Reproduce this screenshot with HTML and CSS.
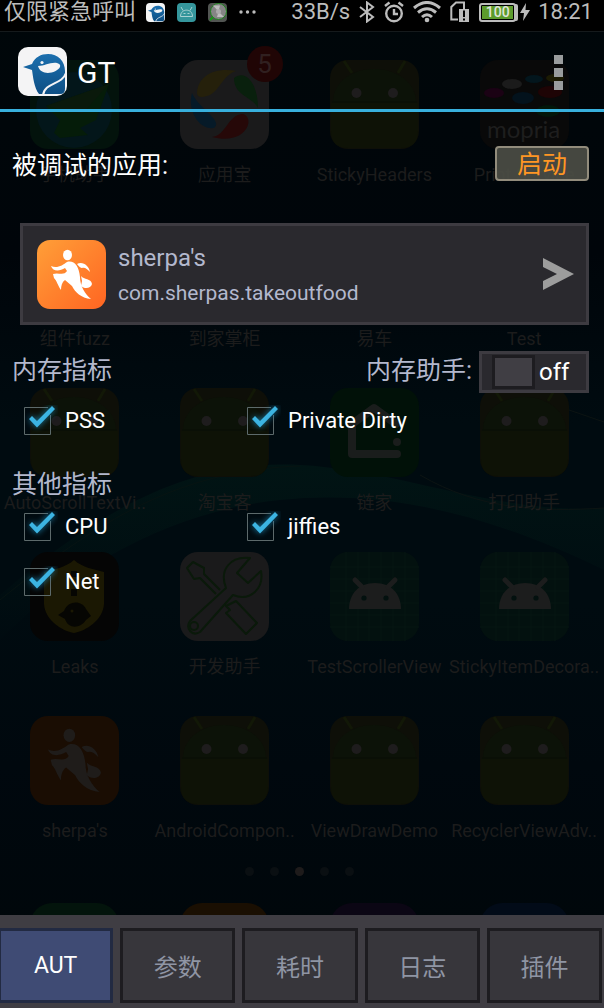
FILE: index.html
```html
<!DOCTYPE html>
<html lang="zh-CN">
<head>
  <meta charset="UTF-8" />
  <meta name="viewport" content="width=device-width, initial-scale=1" />
  <title>GT</title>
  <link rel="stylesheet" href="styles.css">
</head>
<body>
  <!-- shared icons -->
  <svg class="defs" aria-hidden="true">
    <linearGradient id="orange" x1="0" y1="0" x2="1" y2="1">
      <stop offset="0" stop-color="#ff9f38" />
      <stop offset="1" stop-color="#ff6522" />
    </linearGradient>
    <linearGradient id="blue" x1="0" y1="0" x2="0" y2="1">
      <stop offset="0" stop-color="#1b6fae" />
      <stop offset="1" stop-color="#0e4f84" />
    </linearGradient>
    <symbol id="bird" viewBox="0 0 49 49">
      <rect width="49" height="49" rx="10" fill="#f4f4f5" />
      <path d="M5 20 14 17C17 10 23 7 30 7c10 0 17 7 17 17V42q0 5-5 5H21C16 41 15 29 14 23Z" fill="url(#blue)" />
      <path d="M25 48C27 35 44 38 48 26" fill="none" stroke="#f4f4f5" stroke-width="2" />
      <path d="M20 19C27 19 32 15 39 16q4 1 3 4c-3 6-19 10-22-1Z" fill="#f4f4f5" />
      <circle cx="24" cy="15.500" r="1.600" fill="#f4f4f5" />
    </symbol>
    <symbol id="runner" viewBox="0 0 69 69">
      <ellipse cx="30.500" cy="15" rx="4.500" ry="5.200" />
      <path d="M14 26C20 29 26 25 30 22C37 20 42 26 43 37C43 46 48 54 54 59C44 58 38 52 35 46L28 40C25 42 24 46 24 50C20 44 20 41 17 38L16 34C21 32 27 36 30 31L28 28C23 31 16 32 14 26Z" />
      <path d="M40 24C46 21 52 26 53 32C50 29 48 27 45 28Q43 28 40 24Z" />
      <path d="M44 36C47 40 54 38 55 44C54 49 47 49 44 46L45 41ZM41 27 45 37" />
    </symbol>
    <symbol id="droid" viewBox="0 0 89 89">
      <rect width="89" height="89" rx="18" fill="#0e0f08" />
      <path d="M3 42C3 22 22 9 44 9s42 13 42 33Z" fill="#0c1208" />
      <path d="M1 43H88V71Q88 88 71 88H18Q1 88 1 71Z" fill="#0e1206" />
      <path d="M14 1 22 13M75 1 68 13" stroke="#121807" stroke-width="3" />
      <path d="M2 42H87" stroke="#0a0f06" stroke-width="2" />
      <circle cx="26.500" cy="33" r="5" fill="#1e1c1d" />
      <circle cx="63" cy="33" r="5" fill="#1e1c1d" />
    </symbol>
    <symbol id="studio" viewBox="0 0 89 89">
      <rect width="89" height="89" rx="18" fill="#03110f" />
      <path d="M16 0V89M28 0V89M39 0V89M51 0V89M63 0V89M75 0V89M0 15H89M0 27H89M0 39H89M0 51H89M0 63H89M0 75H89" stroke="#061613" />
      <path d="M19 57C19 43 28 31 45 31S71 43 71 57Z" fill="#1c1d1d" />
      <path d="M25 28 32 35M65 28 58 35" stroke="#1c1d1d" stroke-width="5" stroke-linecap="round" />
      <circle cx="34" cy="46" r="2.600" fill="#03110f" />
      <circle cx="56" cy="46" r="2.600" fill="#03110f" />
    </symbol>
    <symbol id="check" viewBox="0 0 34 30">
      <path d="M24 2.500H.5V29.500H26.500V10" fill="none" stroke="#5d6a6b" />
      <path class="tick" d="M5 14 8 11 13 16 28 1 31 4 13 22.500Z" />
    </symbol>
  </svg>

  <div class="screen">
    <div class="launcher">
      <svg class="waves" viewBox="0 0 604 1008" preserveAspectRatio="none" aria-hidden="true">
        <linearGradient id="wave" x1="0" y1="0" x2="0" y2="1">
          <stop offset="0" stop-color="#011414" />
          <stop offset="1" stop-color="#000b10" />
        </linearGradient>
        <path d="M0 595C110 500 200 460 300 465S500 515 604 508V570C480 510 380 490 280 500S80 560 0 640Z" fill="url(#wave)" />
        <path d="M0 600C110 510 190 470 300 466" fill="none" stroke="#071312" />
        <path d="M420 475C480 510 540 512 604 508M540 400 604 422" fill="none" stroke="#0c1413" />
      </svg>
      <ul class="apps">
        <li>
          <svg viewBox="0 0 89 89" aria-hidden="true">
            <rect width="89" height="89" rx="18" fill="#03130c" />
            <circle cx="44" cy="50" r="38" fill="#03161a" />
            <path d="M16 46 79 24 66 60 50 68 58 75 30 78 24 73 30 60Z" fill="#051c09" />
            <path d="M16 46 52 54 79 24Z" fill="#0a190b" />
          </svg>
          <span>手机助手</span>
        </li>
        <li>
          <svg viewBox="0 0 89 89" aria-hidden="true">
            <rect width="89" height="89" rx="18" fill="#1a1a1b" />
            <path d="M17 33C18 15 36 7 56 11C40 16 40 36 22 37Q17 37 17 33Z" fill="#25200b" />
            <path d="M54 18C66 9 78 24 78 48C72 36 54 36 54 18Z" fill="#09200d" />
            <path d="M32 77C46 76 48 54 63 54C76 58 66 86 32 77Z" fill="#260808" />
            <path d="M12 33C7 52 20 70 34 68C44 61 18 48 12 33Z" fill="#061a28" />
          </svg>
          <b class="badge">5</b>
          <span>应用宝</span>
        </li>
        <li><svg aria-hidden="true"><use href="#droid" /></svg><span>StickyHeaders</span></li>
        <li>
          <svg viewBox="0 0 89 89" aria-hidden="true">
            <rect width="89" height="89" rx="18" fill="#090909" />
            <ellipse cx="32" cy="24" rx="10" ry="5" fill="#1b1b1b" />
            <ellipse cx="54" cy="19" rx="9" ry="4" fill="#03161d" />
            <ellipse cx="75" cy="18" rx="9" ry="4" fill="#1c1b03" />
            <ellipse cx="14" cy="33" rx="10" ry="5" fill="#1b0214" />
            <ellipse cx="43" cy="38" rx="11" ry="6" fill="#03121c" />
            <ellipse cx="70" cy="32" rx="12" ry="6" fill="#1e0405" />
            <ellipse cx="68" cy="51" rx="12" ry="6" fill="#03160a" />
            <text x="7" y="78" class="mopria">mopria</text>
          </svg>
          <span>Print Service</span>
        </li>

        <li><svg aria-hidden="true"><use href="#droid" /></svg><span>组件fuzz</span></li>
        <li><svg aria-hidden="true"><use href="#droid" /></svg><span>到家掌柜</span></li>
        <li><svg aria-hidden="true"><use href="#droid" /></svg><span>易车</span></li>
        <li><svg aria-hidden="true"><use href="#droid" /></svg><span>Test</span></li>

        <li><svg aria-hidden="true"><use href="#droid" /></svg><span>AutoScrollTextVi..</span></li>
        <li><svg aria-hidden="true"><use href="#droid" /></svg><span>淘宝客</span></li>
        <li>
          <svg viewBox="0 0 89 89" aria-hidden="true">
            <rect width="89" height="89" rx="18" fill="#011108" />
            <path d="M67 66H22V36L44 20 66 36" fill="none" stroke="#1a1d1c" stroke-width="8" stroke-linejoin="round" stroke-linecap="round" />
            <circle cx="67" cy="54" r="4" fill="#1a1d1c" />
          </svg>
          <span>链家</span>
        </li>
        <li><svg aria-hidden="true"><use href="#droid" /></svg><span>打印助手</span></li>

        <li>
          <svg viewBox="0 0 89 89" aria-hidden="true">
            <rect width="89" height="89" rx="18" fill="#050505" />
            <path d="M44 8C53 16 64 17 74 20V52C73 68 56 79 44 81C32 79 15 68 14 52V20C24 17 35 16 44 8Z" fill="#1b1803" />
            <path d="M41 19H47V25H41ZM41 37H47V44H41ZM28 63 34 59C38 48 52 48 56 57L61 64 56 68C50 77 38 77 35 67Z" fill="#060603" />
            <circle cx="42" cy="59" r="1.500" fill="#1b1803" />
          </svg>
          <span>Leaks</span>
        </li>
        <li>
          <svg viewBox="0 0 89 89" aria-hidden="true">
            <rect width="89" height="89" rx="18" fill="#1a1a1b" />
            <g fill="none" stroke="#0a190a" stroke-width="2" stroke-linejoin="round">
              <path d="M70 6C50 4 39 18 46 36L10 69C5 76 12 85 20 80L53 43C71 50 84 36 81 19L68 31 57 21Z" />
              <circle cx="14" cy="74" r="4" />
              <path d="M36 42 20 26 14 27 7 16 13 10 24 16V22L40 38M46 54 56 49 77 71 66 82 46 61 50 58Z" />
            </g>
          </svg>
          <span>开发助手</span>
        </li>
        <li><svg aria-hidden="true"><use href="#studio" /></svg><span>TestScrollerView</span></li>
        <li><svg aria-hidden="true"><use href="#studio" /></svg><span>StickyItemDecora..</span></li>

        <li>
          <svg viewBox="0 0 69 69" aria-hidden="true">
            <rect width="69" height="69" rx="14" fill="#1a0d03" />
            <use href="#runner" fill="#1f1c1a" />
          </svg>
          <span>sherpa's</span>
        </li>
        <li><svg aria-hidden="true"><use href="#droid" /></svg><span>AndroidCompon..</span></li>
        <li><svg aria-hidden="true"><use href="#droid" /></svg><span>ViewDrawDemo</span></li>
        <li><svg aria-hidden="true"><use href="#droid" /></svg><span>RecyclerViewAdv..</span></li>
      </ul>
      <div class="pager"><i></i><i></i><i class="current"></i><i></i><i></i></div>
      <div class="dock">
        <i class="phone"></i><i class="contacts"></i><i class="messages"></i><i class="browser"></i>
      </div>
    </div>

    <div class="app">
      <div class="status-bar">
        <span class="carrier">仅限紧急呼叫</span>
        <div class="notices">
          <svg width="19" height="19" aria-hidden="true"><use href="#bird" /></svg>
          <svg width="19" height="19" viewBox="0 0 19 19" aria-hidden="true">
            <rect width="19" height="19" rx="4" fill="#35969c" />
            <path d="M3.500 13.500C3.500 5 15.500 5 15.500 13.500ZM4 4 6 7.500M15 4 13 7.500" fill="none" stroke="#a9d2d3" />
            <path d="M6.500 10.500h2M10.500 10.500h2" stroke="#a9d2d3" />
          </svg>
          <svg width="19" height="19" viewBox="0 0 19 19" aria-hidden="true">
            <rect width="19" height="19" rx="4" fill="#525552" />
            <path d="M2 17 5 14" stroke="#159915" stroke-width="2" />
            <circle cx="10.500" cy="8.500" r="8" fill="#858585" stroke="#1c841c" />
            <path d="M10.500 8.500 5 2.500h7ZM10.500 8.500 16 14H9Z" fill="#bdbdbd" />
            <circle cx="10.500" cy="8.500" r="2.500" fill="#aaa" />
          </svg>
          <svg width="17" height="4" viewBox="0 0 17 4" class="more" aria-hidden="true">
            <circle cx="2" cy="2" r="1.700" /><circle cx="8.500" cy="2" r="1.700" /><circle cx="15" cy="2" r="1.700" />
          </svg>
        </div>
        <div class="system">
          <span>33B/s</span>
          <svg width="16" height="22" viewBox="0 0 16 22" aria-hidden="true">
            <path d="M1 6 14 16 8 20.500V1.500L14 6 1 16" fill="none" stroke="#bcbcbc" stroke-width="2" />
          </svg>
          <svg width="20" height="22" viewBox="0 0 20 22" aria-hidden="true">
            <g fill="none" stroke="#bcbcbc" stroke-width="2.400">
              <circle cx="10" cy="12.500" r="7.800" />
              <path d="M10 8V13H14M1 5 5.500 1.500M19 5 14.500 1.500" />
            </g>
          </svg>
          <svg width="28" height="22" viewBox="0 0 28 22" aria-hidden="true">
            <g fill="none" stroke="#bcbcbc" stroke-width="3">
              <path d="M1 7Q14-4 27 7M5 11.500Q14 4 23 11.500M9 16Q14 11.500 19 16" />
            </g>
            <circle cx="14" cy="19" r="2.300" fill="#bcbcbc" />
          </svg>
          <svg width="20" height="22" viewBox="0 0 20 22" aria-hidden="true">
            <path d="M8 18.500H1.300V6L6 1.500H14V8" fill="none" stroke="#bcbcbc" stroke-width="2" />
            <path d="M9 8H19V21H9Z" fill="#bcbcbc" />
            <path d="M14 9.500V16M14 17.500V19.500" stroke="#000" stroke-width="2" />
          </svg>
          <span class="battery">100</span>
          <svg class="bolt" width="10" height="18" viewBox="0 0 10 18" aria-hidden="true">
            <path d="M6 0 0 10H4L3 18 10 7H5.500Z" fill="#bcbcbc" />
          </svg>
          <time>18:21</time>
        </div>
      </div>

      <header class="action-bar">
        <svg class="logo" width="49" height="49" aria-hidden="true"><use href="#bird" /></svg>
        <h1>GT</h1>
        <button class="menu" aria-label="菜单"><i></i><i></i><i></i></button>
      </header>

      <main>
        <div class="title-row">
          <h2>被调试的应用:</h2>
          <button class="launch">启动</button>
        </div>

        <button class="target">
          <svg width="69" height="69" viewBox="0 0 69 69" aria-hidden="true">
            <rect width="69" height="69" rx="13" fill="url(#orange)" />
            <use href="#runner" fill="#fff" />
          </svg>
          <span class="target-text">
            <span class="target-name">sherpa's</span>
            <span class="target-package">com.sherpas.takeoutfood</span>
          </span>
          <svg class="arrow" width="31" height="32" viewBox="0 0 31 32" aria-hidden="true">
            <path d="M0 0 31 16 0 32V23L14 16 0 9Z" fill="#9d9d9d" />
          </svg>
        </button>

        <section>
          <div class="section-head">
            <h3>内存指标</h3>
            <div class="helper">
              <span id="helperLabel">内存助手:</span>
              <button class="switch" role="switch" aria-checked="false" aria-labelledby="helperLabel"><i></i>off</button>
            </div>
          </div>
          <div class="checks">
            <label><span class="box"><input type="checkbox" checked><svg aria-hidden="true"><use href="#check" /></svg></span>PSS</label>
            <label><span class="box"><input type="checkbox" checked><svg aria-hidden="true"><use href="#check" /></svg></span>Private Dirty</label>
          </div>
        </section>

        <section>
          <div class="section-head other">
            <h3>其他指标</h3>
          </div>
          <div class="checks">
            <label><span class="box"><input type="checkbox" checked><svg aria-hidden="true"><use href="#check" /></svg></span>CPU</label>
            <label><span class="box"><input type="checkbox" checked><svg aria-hidden="true"><use href="#check" /></svg></span>jiffies</label>
            <label><span class="box"><input type="checkbox" checked><svg aria-hidden="true"><use href="#check" /></svg></span>Net</label>
          </div>
        </section>
      </main>

      <nav class="tabs">
        <button class="active">AUT</button>
        <button>参数</button>
        <button>耗时</button>
        <button>日志</button>
        <button>插件</button>
      </nav>
    </div>
  </div>
</body>
</html>
```
FILE: styles.css
```css
* {
  box-sizing: border-box;
}

body {
  margin: 0;
  background: #00060a;
  color: #fff;
  font-family: Roboto, "Noto Sans CJK SC", sans-serif;
  font-size: 22px;
}

button {
  margin: 0;
  padding: 0;
  font: inherit;
  cursor: pointer;
}

h1,
h2,
h3,
ul {
  margin: 0;
  padding: 0;
  font-weight: 400;
}

svg {
  display: block;
  flex-shrink: 0;
}

.defs {
  position: absolute;
  width: 0;
  height: 0;
}

/* home screen and app share one grid cell, the app is on top */
.screen {
  display: grid;
  min-height: 100vh;
  overflow: hidden;
}

.launcher,
.app {
  grid-area: 1 / 1;
  min-width: 0;
}

/* ---- home screen ---- */
.launcher {
  position: relative;
  height: 100vh;
  overflow: hidden;
  padding: 60px 5px 0 0;
  background: linear-gradient(#00070a 0, #00050a 25%, #000b10 42%, #000b10 60%, #00080e 76%, #000609 100%);
}

.waves {
  position: absolute;
  inset: 0;
  width: 100%;
  height: 100%;
}

.apps {
  position: relative;
  display: grid;
  grid-template-columns: repeat(4, 1fr);
  row-gap: 38px;
  list-style: none;
}

.apps li {
  position: relative;
  display: flex;
  flex-direction: column;
  align-items: center;
  gap: 15px;
  min-width: 0;
  color: #1c1c1c;
  font-size: 18px;
  line-height: 22px;
  white-space: nowrap;
}

.apps svg {
  width: 89px;
  height: 89px;
}

.mopria {
  font-family: Lato, sans-serif;
  font-size: 24px;
  fill: #1e1e1e;
}

.badge {
  position: absolute;
  top: -14px;
  left: calc(50% + 22px);
  width: 36px;
  height: 36px;
  border-radius: 50%;
  background: #200505;
  color: #302020;
  font-size: 26px;
  font-weight: 400;
  line-height: 36px;
  text-align: center;
}

.pager {
  position: relative;
  display: flex;
  justify-content: center;
  gap: 16px;
  padding: 25px 0 27px;
}

.pager i {
  width: 9px;
  height: 9px;
  border-radius: 50%;
  background: #0a0f12;
}

.pager .current {
  background: #1e1b1b;
}

.dock {
  position: relative;
  display: grid;
  grid-template-columns: repeat(4, 1fr);
  justify-items: center;
}

.dock i {
  width: 89px;
  height: 89px;
  border-radius: 22px;
}

.phone { background: #03140c; }
.contacts { background: #1a0f02; }
.messages { background: #0b0614; }
.browser { background: #020b18; }

/* ---- app ---- */
.app {
  position: relative;
  display: flex;
  flex-direction: column;
}

.status-bar {
  display: flex;
  align-items: center;
  height: 32px;
  padding: 0 11px 7px 4px;
  background: #000;
  border-bottom: 1px solid #151a1c;
  color: #bcbcbc;
  line-height: 24px;
}

.notices {
  display: flex;
  align-items: center;
  gap: 12px;
  margin-left: 10px;
}

.more {
  fill: #bcbcbc;
}

.system {
  display: flex;
  align-items: center;
  gap: 9px;
  margin-left: auto;
}

.battery {
  width: 37px;
  height: 19px;
  border: 2px solid #bcbcbc;
  border-radius: 3px;
  background: #5c9b2d;
  box-shadow: inset 0 0 0 1px #000, 3px 0 0 -1px #bcbcbc;
  color: #e0e6da;
  font-size: 14px;
  font-weight: 500;
  line-height: 15px;
  text-align: center;
}

.bolt {
  margin: 0 -1px 0 -5px;
}

.action-bar {
  display: flex;
  align-items: center;
  gap: 10px;
  height: 80px;
  padding: 0 41px 0 18px;
  border-bottom: 3px solid #38b0dd;
}

.action-bar h1 {
  padding-top: 4px;
  font-size: 30px;
  line-height: 36px;
}

.logo {
  margin-top: 2px;
}

.menu {
  display: flex;
  flex-direction: column;
  gap: 4px;
  margin: 3px 0 0 auto;
  border: 0;
  background: none;
}

.menu i {
  width: 9px;
  height: 9px;
  background: #999c9d;
}

main {
  flex: 1;
  padding: 34px 15px 0 12px;
}

.title-row {
  display: flex;
  align-items: center;
  justify-content: space-between;
  height: 35px;
}

h2,
h3,
.helper {
  font-size: 25px;
  line-height: 36px;
}

.title-row h2 {
  padding-top: 4px;
}

.launch {
  width: 94px;
  height: 35px;
  padding-top: 2px;
  border: 2px solid #928c7c;
  border-radius: 4px;
  background: rgba(76, 79, 70, 0.9);
  color: #ff9624;
  font-size: 25px;
  line-height: 30px;
}

.target {
  display: flex;
  align-items: center;
  gap: 12px;
  width: calc(100% - 8px);
  height: 102px;
  margin: 42px 0 0 8px;
  padding: 0 12px 0 14px;
  border: 3px solid #3d3b41;
  background: #2a292e;
  color: #b3b8cd;
  text-align: left;
}

.target-text {
  display: flex;
  flex: 1;
  flex-direction: column;
  gap: 7px;
  padding-top: 2px;
  line-height: 28px;
}

.target-name {
  font-size: 24px;
}

.target-package {
  font-size: 21px;
}

.section-head {
  display: flex;
  align-items: center;
  justify-content: space-between;
  height: 42px;
  margin-top: 26px;
  color: #b3b8cd;
}

.section-head.other {
  height: 36px;
  margin-top: 33px;
}

.section-head h3,
.helper span {
  margin-top: -3px;
}

.helper {
  display: flex;
  align-items: center;
  gap: 7px;
}

.switch {
  display: flex;
  align-items: center;
  gap: 4px;
  width: 110px;
  height: 42px;
  padding: 0 10px;
  border: 3px solid #3d3b41;
  background: #2a292e;
  color: #fff;
  font-size: 24px;
  line-height: 40px;
}

.switch i {
  width: 43px;
  height: 34px;
  border: 3px solid #1d1c20;
  background: #403e44;
}

.checks {
  display: grid;
  grid-template-columns: 223px 1fr;
  row-gap: 27px;
  padding: 14px 0 0 12px;
}

.checks label {
  display: flex;
  align-items: center;
  gap: 13px;
  height: 28px;
  line-height: 28px;
}

.section-head.other + .checks {
  padding-top: 9px;
}

/* the tick reaches over the top right corner of the box */
.box {
  position: relative;
  width: 28px;
  height: 28px;
}

.box input {
  display: block;
  appearance: none;
  width: 28px;
  height: 28px;
  margin: 0;
  cursor: pointer;
}

.box svg {
  position: absolute;
  top: -2px;
  left: 0;
  width: 34px;
  height: 30px;
  overflow: visible;
  pointer-events: none;
}

.tick {
  fill: #3cb4e2;
  filter: drop-shadow(0 0 3px #1c7ea8);
}

.tabs {
  display: flex;
  gap: 7px;
  margin-left: -2px;
  padding: 13px 2px 5px 0;
  background: #3f3d43;
}

.tabs button {
  flex: 1;
  height: 75px;
  border: 3px solid #1d1c20;
  background: #37363b;
  color: #8f95a4;
  font-size: 24px;
}

.tabs .active {
  border-color: #222a42;
  background: #3f4b74;
  color: #fff;
  font-size: 23px;
}
```
